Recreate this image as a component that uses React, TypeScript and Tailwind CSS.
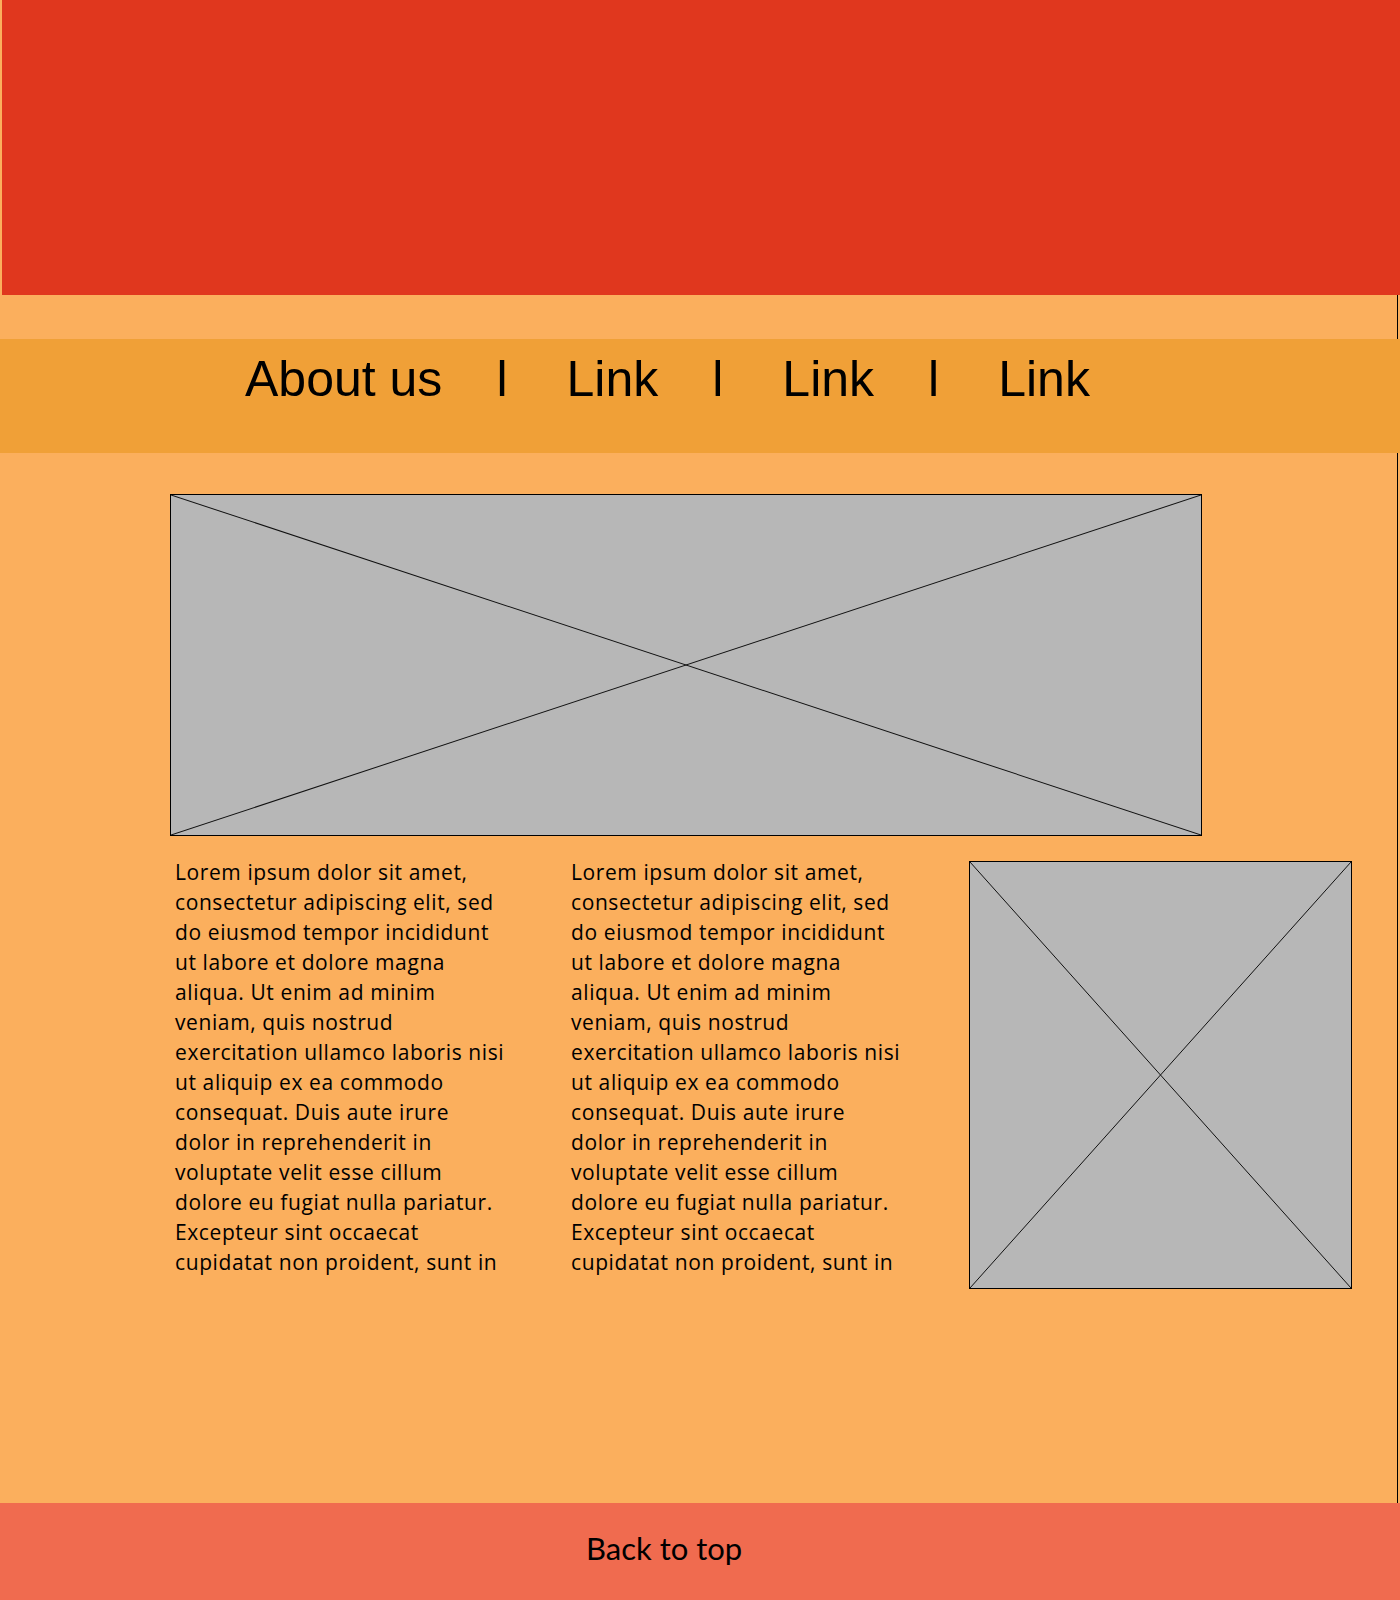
const lines = [
  'Lorem ipsum dolor sit amet,',
  'consectetur adipiscing elit, sed',
  'do eiusmod tempor incididunt',
  'ut labore et dolore magna',
  'aliqua. Ut enim ad minim',
  'veniam, quis nostrud',
  'exercitation ullamco laboris nisi',
  'ut aliquip ex ea commodo',
  'consequat. Duis aute irure',
  'dolor in reprehenderit in',
  'voluptate velit esse cillum',
  'dolore eu fugiat nulla pariatur.',
  'Excepteur sint occaecat',
  'cupidatat non proident, sunt in',
]

function Placeholder({ className }: { className: string }) {
  return (
    <div className={`relative border border-black bg-[#b7b7b7] ${className}`}>
      <svg className="absolute inset-0 h-full w-full" preserveAspectRatio="none" viewBox="0 0 100 100">
        <line x1="0" y1="0" x2="100" y2="100" stroke="#111" strokeWidth="1" vectorEffect="non-scaling-stroke" />
        <line x1="100" y1="0" x2="0" y2="100" stroke="#111" strokeWidth="1" vectorEffect="non-scaling-stroke" />
      </svg>
    </div>
  )
}

function Column({ className }: { className: string }) {
  return (
    <p
      className={`whitespace-nowrap font-['Open_Sans',sans-serif] text-[21px] leading-[30px] tracking-[0.6px] text-black ${className}`}
    >
      {lines.map((l, i) => (
        <span key={i} className="block">
          {l}
        </span>
      ))}
    </p>
  )
}

function NavLink({ label }: { label: string }) {
  return <a className="text-black">{label}</a>
}

function Sep() {
  return <span className="ml-[54px] mr-[59px]">l</span>
}

export default function App() {
  return (
    <div className="flex h-[1600px] w-[1400px] flex-col bg-[#fbaf5d] font-['Lato',sans-serif]">
      <header className="ml-[2px] h-[295px] shrink-0 bg-[#e0371e]" />
      <div className="h-[44px] w-[1398px] shrink-0 border-r border-black" />

      <nav className="flex h-[114px] shrink-0 bg-[#f0a037] pl-[245px] pt-[15px] font-['Liberation_Sans',Arial,sans-serif] text-[50px] leading-[50px] text-black">
        <NavLink label="About us" />
        <Sep />
        <NavLink label="Link" />
        <Sep />
        <NavLink label="Link" />
        <Sep />
        <NavLink label="Link" />
      </nav>

      <main className="w-[1398px] flex-1 border-r border-black pl-[170px] pt-[41px]">
        <Placeholder className="h-[342px] w-[1032px]" />
        <div className="mt-[21px] flex items-start">
          <Column className="ml-[5px] w-[396px]" />
          <Column className="w-[398px]" />
          <Placeholder className="mt-[4px] h-[428px] w-[383px]" />
        </div>
      </main>

      <footer className="h-[97px] shrink-0 bg-[#f06b4f] pl-[586px] pt-[27px]">
        <a className="text-[31px] leading-[37px] text-black">Back to top</a>
      </footer>
    </div>
  )
}
